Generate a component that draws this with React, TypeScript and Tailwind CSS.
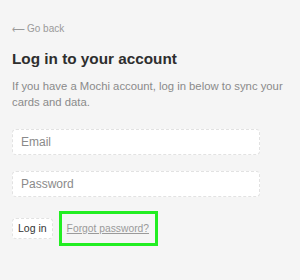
import React from "react";

export default function App() {
  return (
    <div className="w-[300px] h-[280px] bg-[#f5f5f5] overflow-hidden" style={{ fontFamily: '"Liberation Sans", Arial, sans-serif' }}>
      <div className="px-3 pt-[22px]">
        <a className="flex items-center gap-[2px] text-[10px] leading-[14px] text-[#9a9a9a]">
          <span className="text-[9px]">⟵</span>
          <span>Go back</span>
        </a>
        <h1 className="mt-[13px] text-[15.3px] leading-[20px] font-bold text-[#2e2e2e]">Log in to your account</h1>
        <p className="mt-[9px] text-[11.3px] leading-[16px] text-[#8a8a8a]">
          If you have a Mochi account, log in below to sync your cards and data.
        </p>
        <div className="mt-[19px] flex flex-col gap-[16px] w-[248px]">
          <div className="h-[26px] bg-white border border-dashed border-[#e2e2e2] rounded-[4px] flex items-center px-[8px] text-[12px] text-[#8a8a8a]">Email</div>
          <div className="h-[26px] bg-white border border-dashed border-[#e2e2e2] rounded-[4px] flex items-center px-[8px] text-[12px] text-[#8a8a8a]">Password</div>
        </div>
        <div className="mt-[14px] flex items-center gap-[6px]">
          <button className="h-[21px] px-[5px] bg-white border border-dashed border-[#e2e2e2] rounded-[4px] text-[10.5px] text-[#333] font-medium">Log in</button>
          <div className="h-[35px] border-[3px] border-[#22ee22] flex items-center pl-[5px] pr-[6px]">
            <a className="text-[10.3px] text-[#9a9a9a] underline">Forgot password?</a>
          </div>
        </div>
      </div>
    </div>
  );
}
